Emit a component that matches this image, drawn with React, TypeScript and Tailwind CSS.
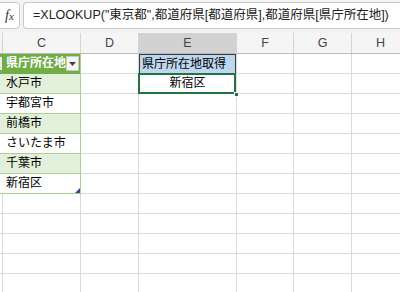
import React from 'react';

const cols = [
  { key: 'B', w: 'w-[3px]' },
  { key: 'C', w: 'w-[78px]' },
  { key: 'D', w: 'w-[58px]' },
  { key: 'E', w: 'w-[98px]' },
  { key: 'F', w: 'w-[57px]' },
  { key: 'G', w: 'w-[58px]' },
  { key: 'H', w: 'w-[58px]' }
];

const cities = ['水戸市', '宇都宮市', '前橋市', 'さいたま市', '千葉市', '新宿区'];

const font = { fontFamily: '"Liberation Sans", "Noto Sans CJK JP", sans-serif' };

function FilterButton() {
  return (
    <span className="absolute right-[1px] top-[2px] w-[13px] h-[15px] bg-[#f4f4f4] border border-[#c8c8c8] flex items-center justify-center">
      <svg width="7" height="4" viewBox="0 0 7 4">
        <path d="M0 0h7L3.5 4z" fill="#444" />
      </svg>
    </span>
  );
}

function TableCell({ row, col }: { row: number; col: string }) {
  // row 0 = table header, 1..6 = data
  const banded = row % 2 === 1;
  if (row === 0) {
    return (
      <div className="relative h-full bg-[#70ad47] text-white font-bold text-[12px] leading-[19px] pl-[3px] whitespace-nowrap overflow-hidden">
        {col === 'C' ? '県庁所在地' : ''}
        {col === 'C' ? <FilterButton /> : <span className="absolute left-0 top-[3px] w-[2px] h-[13px] bg-[#ececec]" />}
      </div>
    );
  }
  return (
    <div
      className={`relative h-full text-[12px] leading-[19px] pl-[3px] whitespace-nowrap overflow-hidden border-b border-[#a9d08e] ${
        banded ? 'bg-[#e2efda]' : 'bg-white'
      }`}
    >
      {col === 'C' ? cities[row - 1] : ''}
      {col === 'C' && row === 6 && (
        <svg className="absolute right-0 bottom-0" width="5" height="5" viewBox="0 0 5 5">
          <path d="M5 0v5H0z" fill="#2f4a8a" />
        </svg>
      )}
    </div>
  );
}

function Cell({ row, col }: { row: number; col: string }) {
  // row numbers match the sheet: 2..14
  const inTable = (col === 'B' || col === 'C') && row >= 2 && row <= 8;
  if (inTable) {
    return <TableCell row={row - 2} col={col} />;
  }
  if (col === 'E' && row === 2) {
    return (
      <div className="h-full bg-[#bdd7ee] border-t border-l border-r border-[#3a3a3a] text-[12px] leading-[18px] pl-[2px] whitespace-nowrap">
        県庁所在地取得
      </div>
    );
  }
  if (col === 'E' && row === 3) {
    return (
      <div className="relative h-full bg-white text-[12px] leading-[19px] text-center">
        新宿区
        <div className="absolute -left-[1px] -top-[1px] right-0 bottom-0 border-2 border-[#217346]" />
        <div className="absolute -right-[3px] -bottom-[3px] w-[5px] h-[5px] bg-[#217346] border border-white" />
      </div>
    );
  }
  return <div className="h-full border-b border-[#dadada]" />;
}

export default function App() {
  const rows = Array.from({ length: 13 }, (_, i) => i + 2);

  return (
    <div className="w-[400px] h-[292px] overflow-hidden bg-white text-black" style={font}>
      {/* formula bar */}
      <div className="h-[33px] bg-[#f3f3f3] flex items-start pt-[2px]">
        <div className="w-[22px] h-[27px] -ml-[2px] bg-white border border-[#c9c9c9] rounded-r-[4px] flex items-center justify-center">
          <span className="text-[14px] text-[#333] italic pl-[1px]" style={{ fontFamily: '"Liberation Serif", serif' }}>
            f<span className="text-[11px]">x</span>
          </span>
        </div>
        <div className="ml-[3px] flex-1 h-[27px] bg-white border border-[#c9c9c9] border-r-0 rounded-l-[4px] pl-[9px] flex items-center text-[12.5px] text-[#222] whitespace-nowrap overflow-hidden">
          =XLOOKUP("東京都",都道府県[都道府県],都道府県[県庁所在地])
        </div>
      </div>

      {/* column headers */}
      <div className="flex h-[21px] border-b border-[#bcbcbc]">
        {cols.map((c) => (
          <div
            key={c.key}
            className={`${c.w} shrink-0 h-full border-r border-[#d4d4d4] flex items-center justify-center text-[12.5px] text-[#444] overflow-hidden ${
              c.key === 'E' ? 'bg-[#d2d2d2]' : 'bg-[#f5f5f5]'
            }`}
          >
            {c.key === 'B' ? '' : c.key}
          </div>
        ))}
      </div>

      {/* cells */}
      {rows.map((r) => (
        <div key={r} className="flex h-[20px]">
          {cols.map((c) => (
            <div
              key={c.key}
              className={`${c.w} shrink-0 h-full border-r ${
                (c.key === 'C' || c.key === 'B') && r <= 8 ? 'border-[#a9d08e]' : 'border-[#dadada]'
              }`}
            >
              <Cell row={r} col={c.key} />
            </div>
          ))}
        </div>
      ))}
    </div>
  );
}
